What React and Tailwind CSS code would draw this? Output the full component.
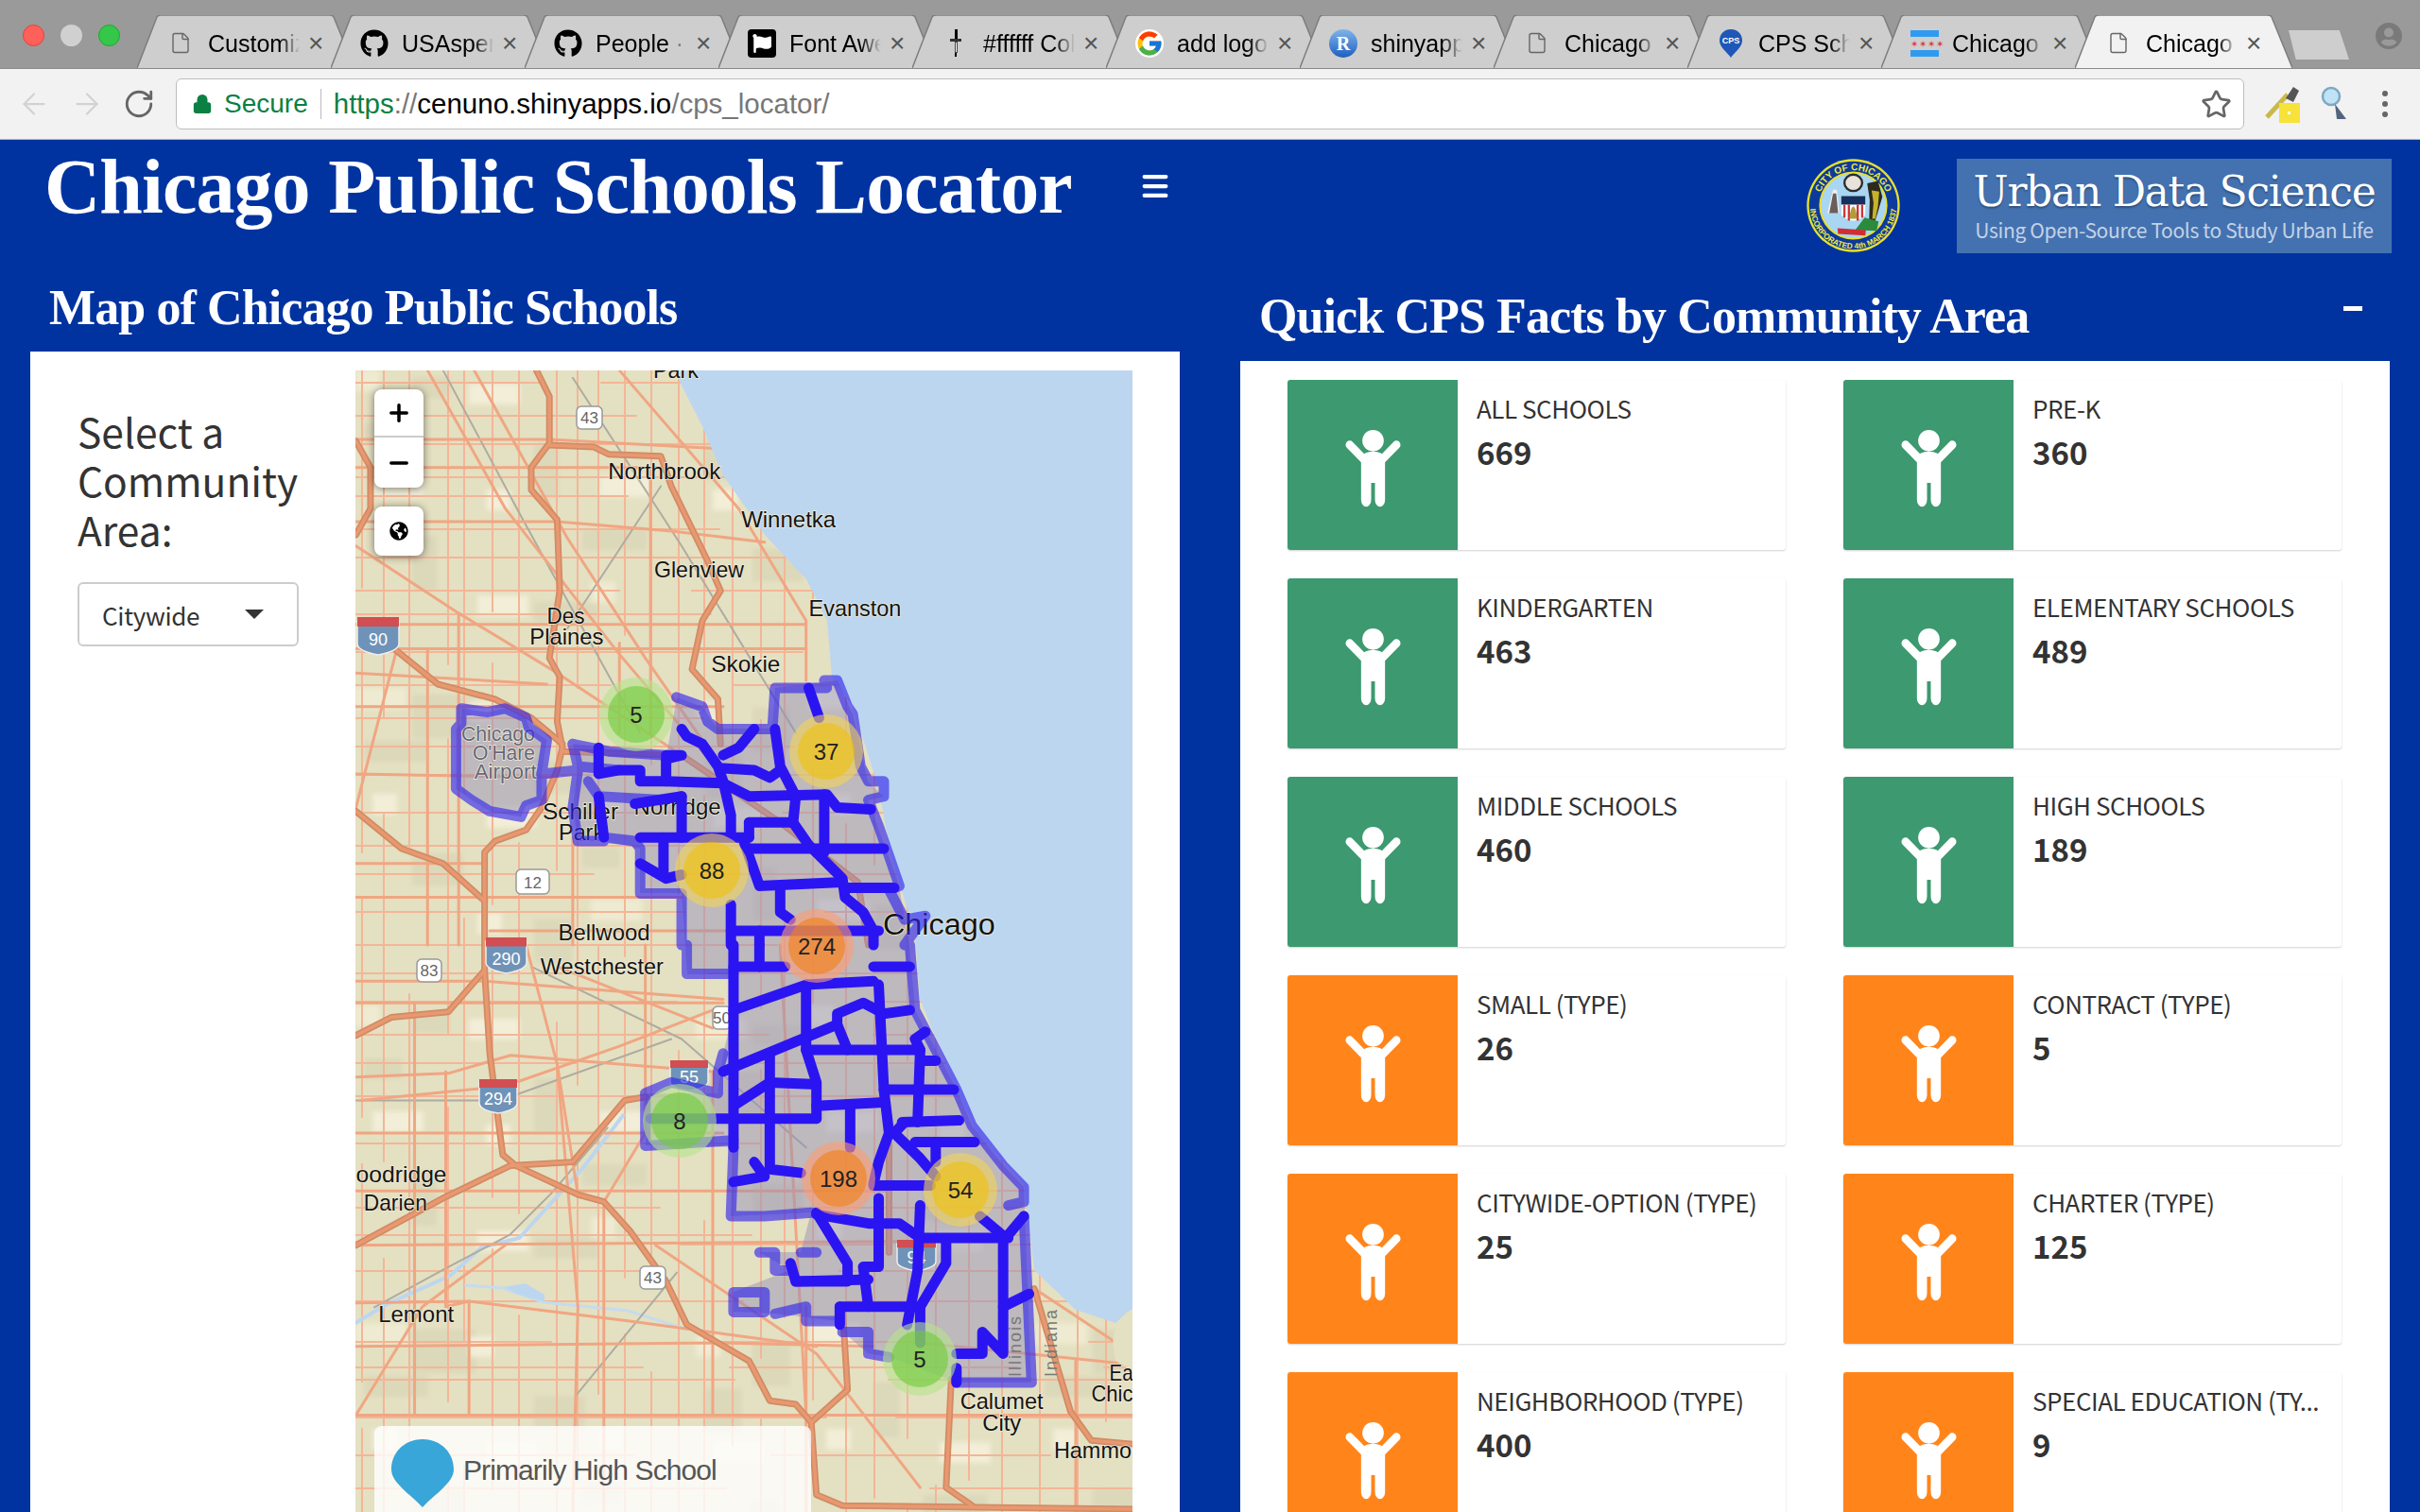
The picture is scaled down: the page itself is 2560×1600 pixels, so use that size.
import { ArrowLeft, ArrowRight, RotateCw, Star, Lock, File, Menu, Plus, Minus } from 'lucide-react';
import { FaGithub, FaFlag, FaGlobeAmericas, FaUserCircle } from 'react-icons/fa';
import { FcGoogle } from 'react-icons/fc';

const sans = "font-['Noto_Sans_CJK_SC','Noto_Sans',sans-serif]";
const arial = "font-['Liberation_Sans',Arial,sans-serif]";
const times = "font-['Liberation_Serif','Times_New_Roman',serif]";

const TABS = [
  { title: 'Customize', icon: 'doc' },
  { title: 'USAspending', icon: 'github' },
  { title: 'People ·', icon: 'github' },
  { title: 'Font Awesome', icon: 'fa' },
  { title: '#ffffff Color', icon: 'dropper' },
  { title: 'add logo', icon: 'google' },
  { title: 'shinyapps', icon: 'r' },
  { title: 'Chicago', icon: 'doc' },
  { title: 'CPS Schools', icon: 'cps' },
  { title: 'Chicago', icon: 'flag' },
  { title: 'Chicago', icon: 'doc', active: true },
];

const FACTS = [
  { label: 'ALL SCHOOLS', value: '669', tone: 'green' },
  { label: 'PRE-K', value: '360', tone: 'green' },
  { label: 'KINDERGARTEN', value: '463', tone: 'green' },
  { label: 'ELEMENTARY SCHOOLS', value: '489', tone: 'green' },
  { label: 'MIDDLE SCHOOLS', value: '460', tone: 'green' },
  { label: 'HIGH SCHOOLS', value: '189', tone: 'green' },
  { label: 'SMALL (TYPE)', value: '26', tone: 'orange' },
  { label: 'CONTRACT (TYPE)', value: '5', tone: 'orange' },
  { label: 'CITYWIDE-OPTION (TYPE)', value: '25', tone: 'orange' },
  { label: 'CHARTER (TYPE)', value: '125', tone: 'orange' },
  { label: 'NEIGHBORHOOD (TYPE)', value: '400', tone: 'orange' },
  { label: 'SPECIAL EDUCATION (TY...', value: '9', tone: 'orange' },
];

// the map data is noted in crop coordinates, these turn it into page pixels
const a = (x, y) => [370 + x / 1.823, 380 + y / 2.529];
const b = (x, y) => [370 + x / 1.823, 1000 + y / 2.613];
const c3 = (x, y) => [376 + x / 3, 1180 + y / 3];
const line = (conv, nums) => {
  const out = [];
  for (let i = 0; i < nums.length; i += 2) out.push(conv(nums[i], nums[i + 1]).join(','));
  return out.join(' ');
};

const WATER = '713,392 743,451 765,503 809,566 853,613 875,657 880,716 902,748 930,835 940,894 957,953 968,985 973,1057 1012,1153 1034,1199 1083,1253 1094,1344 1138,1386 1180,1400 1198,1385 1198,392';

const GRID_X = [383,406,433,474,491,521,549,589,611,633,661,689,718,745,775,805,830,860,895,925,960,990,1025,1060,1100,1140,1170];
const GRID_Y = [405,440,470,505,525,560,590,625,650,690,725,760,790,820,860,895,925,965,1000,1030,1060,1095,1125,1160,1210,1260,1278,1307,1317,1345,1377,1420,1447,1460,1500,1540,1575];

// land cover patches, laid out on a loose grid
const PATCHES = [];
for (let i = 0; i < 14; i++) {
  for (let j = 0; j < 22; j++) {
    const pick = (i * 7 + j * 13 + i * j) % 6;
    if (pick < 3) {
      PATCHES.push({
        x: 376 + i * 60 + (j % 3) * 9,
        y: 392 + j * 56 + (i % 4) * 7,
        w: 26 + ((i + j) % 4) * 14,
        h: 22 + ((i * j) % 4) * 12,
        fill: ['#efebd2', '#dcd8ba', '#f2eed8'][pick],
      });
    }
  }
}

const FREEWAYS_A = [
  [360,30,385,100,385,225,350,290,350,350,400,430,405,620,385,800,405,850,400,970,410,1040,400,1100,370,1200,340,1260,280,1290,260,1320,260,1568],
  [385,230,470,235,500,255,600,260,620,340,690,540,715,620,680,700,660,830,710,910,715,1030],
  [90,780,170,870,280,910,350,960,410,1030],
  [410,1050,640,1060,830,1240,980,1400,1000,1568],
  [12,220,40,290,40,400,12,470],
  [12,1210,100,1310,180,1350,260,1450],
];
const FREEWAYS_B = [
  [12,250,80,200,190,185,260,70,260,0],
  [260,70,270,300,295,580,320,610,440,690,490,710,540,790,610,930,650,1050,770,1150,810,1260,860,1270,890,1320,900,1520,950,1550,1510,1560],
  [12,830,180,700,310,610,430,600,530,430,570,420],
  [890,1320,960,1230,950,1000],
  [1040,550,1040,850],
  [1320,950,1390,1290,1430,1370,1510,1380],
  [1160,1200,1150,1500,1200,1550],
];
const ARTERIALS_A = [
  [12,215,385,215,720,240],
  [12,290,350,290,620,290],
  [12,435,400,435,620,460,800,490],
  [12,710,880,710],
  [12,775,880,775],
  [12,930,720,930],
  [12,1110,400,1120],
  [12,1440,640,1440],
  [150,30,300,400,520,790,710,1100],
  [240,30,420,480,570,800,720,1100],
  [520,30,750,400,880,700,880,860],
  [12,500,210,680,400,840,640,1060],
  [210,680,210,1568],
  [150,780,150,1568],
  [580,300,580,1000],
  [520,760,520,1000],
  [430,1280,430,1568],
  [90,780,12,1200],
  [12,840,380,870],
  [12,1350,260,1350],
  [270,1530,1000,1530],
];
const ARTERIALS_B = [
  [12,100,260,100,720,150],
  [12,160,720,160],
  [12,365,190,355,310,305,700,350],
  [12,520,290,520,720,520],
  [12,680,1040,680],
  [12,830,1060,820],
  [12,990,230,985,540,1040,900,1110],
  [12,1110,700,1100,1010,1110],
  [12,1300,1510,1300],
  [1100,1100,1510,1160],
  [185,350,185,1000,230,985,230,1300],
  [125,160,125,1300],
  [400,330,440,1000,430,1568],
  [570,0,570,520,490,710,490,1568],
  [700,350,700,1300],
  [340,0,400,330,440,690],
  [880,1000,880,1568],
  [12,1300,140,1000,300,830],
  [830,0,880,1300],
  [590,830,900,1130,1100,1500],
  [1320,950,1510,1130],
  [1400,1150,1400,1568],
  [400,60,700,230],
  [20,430,300,390,520,280,700,180],
];

const AREA_OUTLINE_A = [
  [215,935,215,975,205,990,205,1150,235,1180,270,1210,330,1225,340,1195,370,1180,370,1110,380,1020,345,985,340,960,300,935,265,945,215,935],
  [430,1030,500,1050,610,1060],
  [630,905,680,930,690,970,710,990,815,990,820,880,885,880,920,880,915,860,940,860,960,930,970,950,985,1090,1000,1130,1030,1130,1030,1170,1000,1180,1020,1250,1040,1330,1060,1410,1040,1420,1070,1500,1110,1490,1070,1568],
  [370,1110,440,1100,430,1200,440,1290,490,1290],
  [430,1030,440,1090,520,1100],
  [490,1280,550,1290,560,1310,560,1430,640,1430,640,1568],
  [460,1130,480,1170,600,1180],
];
const AREA_OUTLINE_B = [
  [650,0,650,80,740,80],
  [1080,0,1090,180,1170,400,1200,500,1260,610,1300,670,1300,710,1270,720],
  [1300,750,1315,1210,1170,1210],
  [740,560,735,750,800,750,890,740],
  [570,410,570,555,740,540],
  [570,410,620,380,710,410,710,350,720,300],
  [790,850,820,850,820,900,850,900],
  [740,960,800,960,800,1015,740,1015,740,960],
  [820,1020,880,1000,880,1040,945,1040],
  [870,850,900,850],
  [950,1070,1000,1070,1000,1130,1040,1140],
];
const AREA_LINES_A = [
  [480,1040,480,1110,520,1100,560,1100,560,1130,610,1130,720,1135,770,1170,920,1165,940,1200,1005,1205],
  [640,990,650,1010,680,1030,710,1090,720,1130,735,1220,735,1270],
  [720,1060,750,1040,780,990],
  [720,1095,780,1100,810,1120,830,1100],
  [820,990,830,1090,860,1170,855,1240,885,1300,950,1390,955,1440,990,1480,1010,1530,1010,1568],
  [885,880,905,960],
  [915,1165,915,1320],
  [610,1060,640,1060,610,1070,610,1130],
  [560,1280,770,1280],
  [770,1310,1030,1310],
  [770,1240,855,1240],
  [770,1240,770,1280],
  [640,1170,640,1280],
  [605,1280,605,1380],
  [560,1350,610,1390,640,1380],
  [760,1290,790,1410,950,1400],
  [955,1415,1050,1415],
  [830,1410,830,1480,850,1500],
  [735,1460,735,1568],
  [735,1530,1020,1530],
  [790,1530,790,1568],
  [480,1170,490,1280],
  [550,1190,640,1170],
];
const AREA_LINES_B = [
  [740,0,740,560],
  [740,60,840,60],
  [790,0,790,60],
  [740,180,880,110,1010,100],
  [880,110,880,290,900,380,900,480],
  [720,350,940,220,940,190,990,160,1030,190,1080,180],
  [940,220,960,290],
  [880,290,1100,290,1090,260,1110,240],
  [1100,320,1130,320],
  [1020,110,1030,400,1040,520,1020,600,1010,660],
  [1010,60,1080,60],
  [1030,400,1165,400],
  [1100,290,1095,490],
  [1065,490,1175,485],
  [1070,490,1050,520,1100,590,1130,640],
  [1090,545,1205,545],
  [1130,545,1130,600],
  [745,440,810,380,890,385],
  [810,300,810,620,870,630],
  [780,600,800,640,740,655],
  [580,480,900,480],
  [900,445,1030,435],
  [965,440,965,560],
  [1010,665,1120,665],
  [1020,700,1020,890,990,890,1000,1000],
  [900,740,960,880,960,930,860,930,850,880],
  [860,930,1000,925],
  [900,745,1000,770,1060,770,1100,810,1270,810],
  [1100,720,1095,900,1075,1050],
  [1150,815,1150,880,1100,1000],
  [945,1000,1100,1000,1100,1100],
  [945,1000,945,1050],
  [1260,810,1260,1130,1220,1070,1220,1130,1170,1130],
  [1260,1000,1310,965],
  [1215,750,1265,810,1300,750],
  [1170,1170,1170,1210],
];
const CITY_FILL = '606,787 705,799 716,738 743,748 759,771 817,771 820,728 886,720 902,756 918,827 935,843 918,847 940,906 951,937 957,973 962,1000 968,1069 1012,1153 1028,1191 1061,1233 1083,1256 1091,1463 1012,1463 940,1436 918,1432 891,1409 888,1398 820,1390 776,1388 776,1367 836,1344 803,1325 847,1325 858,1283 773,1287 776,1214 683,1212 683,1157 759,1157 765,1115 776,1069 776,1031 727,1031 721,945 677,945 677,898 639,890 611,890 606,854 611,815';

const CLUSTERS = [
  { n: 5, x: 673, y: 756, c: 'g' },
  { n: 37, x: 874, y: 795, c: 'y' },
  { n: 88, x: 753, y: 921, c: 'y' },
  { n: 274, x: 864, y: 1001, c: 'o' },
  { n: 8, x: 719, y: 1186, c: 'g' },
  { n: 198, x: 887, y: 1247, c: 'o' },
  { n: 54, x: 1016, y: 1259, c: 'y' },
  { n: 5, x: 973, y: 1438, c: 'g' },
];
const CLUSTER_COLORS = {
  g: ['rgba(181,226,140,0.6)', 'rgba(110,204,57,0.6)'],
  y: ['rgba(241,211,87,0.6)', 'rgba(240,194,12,0.6)'],
  o: ['rgba(253,156,115,0.6)', 'rgba(241,128,23,0.6)'],
};

// [text, x, baseline, width, size, colour]
const LABELS = [
  ['Park', ...a(585, 50), 48, 24],
  ['Northbrook', ...a(498, 322), 119, 24],
  ['Winnetka', ...a(755, 450), 100, 24],
  ['Glenview', ...a(587, 585), 95, 24],
  ['Evanston', ...a(885, 688), 98, 24],
  ['Des', ...a(380, 707), 40, 24],
  ['Plaines', ...a(347, 764), 78, 24],
  ['Skokie', ...a(697, 838), 73, 24],
  ['Chicago', ...a(215, 1022), 78, 22, '#66667a'],
  ["O'Hare", ...a(237, 1072), 66, 22, '#66667a'],
  ['Airport', ...a(240, 1122), 66, 22, '#66667a'],
  ['Schiller', ...a(372, 1232), 80, 24],
  ['Park', ...a(403, 1288), 48, 24],
  ['Norridge', ...a(548, 1218), 92, 24],
  ['Chicago', ...a(1028, 1540), 119, 31],
  ['Bellwood', ...a(402, 1555), 97, 24],
  ['Westchester', ...b(368, 82), 130, 24],
  ['oodridge', ...b(12, 655), 96, 24],
  ['Darien', ...b(27, 735), 67, 24],
  ['Lemont', ...b(55, 1042), 80, 24],
  ['Calumet', ...b(1177, 1282), 88, 24],
  ['City', ...b(1220, 1342), 41, 24],
  ['Ea', ...b(1465, 1205), 25, 24],
  ['Chic', ...b(1430, 1262), 44, 24],
  ['Hammo', ...b(1358, 1420), 82, 24],
];

const SHIELDS = [
  { kind: 'us', t: '43', x: 610, y: 430, w: 27, h: 24 },
  { kind: 'i', t: '90', x: 378, y: 653, w: 44, h: 40 },
  { kind: 'us', t: '12', x: 546, y: 920, w: 35, h: 26 },
  { kind: 'us', t: '83', x: 441, y: 1015, w: 26, h: 24 },
  { kind: 'i', t: '290', x: 514, y: 992, w: 43, h: 38 },
  { kind: 'i', t: '55', x: 709, y: 1122, w: 40, h: 32 },
  { kind: 'i', t: '294', x: 507, y: 1142, w: 40, h: 36 },
  { kind: 'us', t: '50', x: 754, y: 1065, w: 19, h: 24 },
  { kind: 'us', t: '43', x: 677, y: 1340, w: 27, h: 24 },
  { kind: 'i', t: '94', x: 949, y: 1312, w: 41, h: 33 },
];

function ChildIcon() {
  return (
    <svg viewBox="68 44 176 246" className="mt-[8px] h-[82px] w-[59px]">
      <g fill="#fff" stroke="none">
        <circle cx="156" cy="78" r="34" />
        <path d="M118 130 Q128 112 156 112 Q184 112 194 130 V265 A16 23 0 0 1 162 265 V212 H150 V265 A16 23 0 0 1 118 265 Z" />
      </g>
      <path d="M82 91 L126 136 M230 91 L186 136" stroke="#fff" strokeWidth="26" strokeLinecap="round" fill="none" />
    </svg>
  );
}

function Favicon({ icon }) {
  if (icon === 'doc') return <File className="h-[27px] w-[24px] text-[#666]" strokeWidth={1.4} />;
  if (icon === 'github') return <FaGithub className="h-[30px] w-[30px] text-black" />;
  if (icon === 'google') return <FcGoogle className="h-[30px] w-[30px] rounded-full bg-white" />;
  if (icon === 'fa') {
    return (
      <div className="flex h-[30px] w-[30px] items-center justify-center rounded-[4px] bg-black">
        <FaFlag className="h-[20px] w-[20px] text-white" />
      </div>
    );
  }
  if (icon === 'dropper') {
    return (
      <div className="flex h-[30px] w-[30px] flex-col items-center justify-center">
        <div className="h-[10px] w-[3px] bg-black" />
        <div className="h-[3px] w-[12px] bg-[#333]" />
        <div className="h-[12px] w-[3px] border border-[#444] bg-white" />
        <div className="h-[4px] w-[2px] bg-black" />
      </div>
    );
  }
  if (icon === 'r') {
    return (
      <div className="flex h-[30px] w-[30px] items-center justify-center rounded-full bg-gradient-to-b from-[#7fb4ea] to-[#1c5fc0]">
        <span className={`${times} text-[20px] font-bold leading-none text-white`}>R</span>
      </div>
    );
  }
  if (icon === 'cps') {
    return (
      <svg viewBox="0 0 30 32" className="h-[32px] w-[30px]">
        <path d="M15 1C7 1 3 7 3 13c0 7 8 12 12 18 4-6 12-11 12-18C27 7 23 1 15 1z" fill="#1f57b8" />
        <text x="15" y="16" textAnchor="middle" fontSize="9" fontWeight="700" fill="#fff" fontFamily="Liberation Sans">CPS</text>
      </svg>
    );
  }
  return (
    <div className="flex h-[28px] w-[30px] flex-col justify-between">
      <div className="h-[7px] bg-[#2f9bf0]" />
      <div className="text-center text-[10px] leading-[8px] tracking-[1px] text-[#d9363e]">✶✶✶✶</div>
      <div className="h-[7px] bg-[#2f9bf0]" />
    </div>
  );
}

function Tab({ tab }) {
  const fill = tab.active ? '#f2f2f2' : '#cecece';
  return (
    <div className="relative -ml-[25px] flex h-[56px] w-[230px] shrink-0 items-center pl-[31px] pt-[3px]">
      <svg viewBox="0 0 230 56" className="absolute inset-0 h-full w-full">
        <path d="M0 56 L21 2 Q22 0 25 0 L204 0 Q207 0 208 2 L230 56" fill={fill} stroke="#7d7d7d" strokeWidth="1.5" />
      </svg>
      <div className="relative flex w-[30px] shrink-0 justify-center"><Favicon icon={tab.icon} /></div>
      <div className={`${arial} relative ml-[14px] w-[97px] overflow-hidden whitespace-nowrap text-[25px] leading-[30px] text-black [mask-image:linear-gradient(to_right,black_78%,transparent)]`}>
        {tab.title}
      </div>
      <span className={`${arial} relative ml-[9px] text-[28px] font-light leading-none text-[#555]`}>×</span>
    </div>
  );
}

function BrowserChrome() {
  return (
    <>
      <div className="relative flex h-[73px] shrink-0 items-end border-b border-[#8a8a8a] bg-[#9a9a9a] pl-[170px]">
        <div className="absolute left-[24px] top-[26px] flex gap-[17px]">
          <div className="h-[23px] w-[23px] rounded-full border border-[#e0443e] bg-[#ff6059]" />
          <div className="h-[23px] w-[23px] rounded-full bg-[#d0d0d0]" />
          <div className="h-[23px] w-[23px] rounded-full border border-[#1aab29] bg-[#34c749]" />
        </div>
        {TABS.map((tab, i) => <Tab key={i} tab={tab} />)}
        <div className="mb-[9px] ml-[-4px] h-[31px] w-[64px] [clip-path:polygon(0_0,84%_0,100%_100%,12%_100%)] bg-[#cecece]" />
        <FaUserCircle className="absolute right-[19px] top-[23px] h-[30px] w-[28px] text-[#7a7a7a]" />
      </div>
      <div className="flex h-[75px] shrink-0 items-center border-b border-[#a8b2c8] bg-[#f2f2f2] pl-[18px] pr-[34px]">
        <ArrowLeft className="h-[36px] w-[36px] shrink-0 text-[#d2d2d2]" strokeWidth={1.5} />
        <ArrowRight className="ml-[20px] h-[36px] w-[36px] shrink-0 text-[#d2d2d2]" strokeWidth={1.5} />
        <RotateCw className="ml-[20px] h-[34px] w-[34px] shrink-0 text-[#666]" strokeWidth={2} />
        <div className="ml-[22px] flex h-[54px] w-[2188px] shrink-0 items-center rounded-[6px] border border-[#bdbdbd] bg-white pl-[16px] pr-[12px]">
          <Lock className="h-[22px] w-[22px] fill-[#0b8043] text-[#0b8043]" strokeWidth={2} />
          <span className={`${arial} ml-[12px] text-[28px] leading-none text-[#0b8043]`}>Secure</span>
          <div className="ml-[13px] h-[32px] w-px bg-[#bbb]" />
          <span className={`${arial} ml-[13px] text-[29.5px] leading-none text-[#777]`}>
            <span className="text-[#0b8043]">https</span>://<span className="text-black">cenuno.shinyapps.io</span>/cps_locator/
          </span>
          <Star className="ml-auto h-[33px] w-[33px] text-[#666]" strokeWidth={2} />
        </div>
        <svg viewBox="0 0 40 40" className="ml-[20px] h-[40px] w-[40px] shrink-0">
          <path d="M4 34 L26 10" stroke="#c9b94a" strokeWidth="5" />
          <path d="M24 14 L32 2 L38 6 L32 18 Z" fill="#555" />
          <rect x="17" y="19" width="22" height="21" fill="#f7e23a" />
          <rect x="26" y="28" width="3" height="3" fill="#fff" />
        </svg>
        <svg viewBox="0 0 32 40" className="ml-[20px] h-[40px] w-[32px] shrink-0">
          <circle cx="12" cy="12" r="9" fill="#bfe3f5" stroke="#7fa8c2" strokeWidth="2.5" />
          <path d="M16 20 L28 36 L18 36 Z" fill="#52657d" />
        </svg>
        <div className="ml-auto flex flex-col gap-[5px]">
          <div className="h-[6px] w-[6px] rounded-full bg-[#666]" />
          <div className="h-[6px] w-[6px] rounded-full bg-[#666]" />
          <div className="h-[6px] w-[6px] rounded-full bg-[#666]" />
        </div>
      </div>
    </>
  );
}

function Seal() {
  return (
    <svg viewBox="0 0 296 296" className="h-[99px] w-[99px]">
      <defs>
        <path id="sealTop" d="M148 148 m-112 0 a112 112 0 0 1 224 0" />
        <path id="sealBottom" d="M148 148 m-137 0 a137 137 0 0 0 274 0" />
      </defs>
      <circle cx="148" cy="148" r="147" fill="#e8e02c" />
      <circle cx="148" cy="148" r="140" fill="#0c3a9c" />
      <circle cx="148" cy="148" r="108" fill="#e8e02c" />
      <circle cx="148" cy="148" r="102" fill="#a9d6f2" />
      <text fontSize="30" fill="#f0e83c" fontFamily="Liberation Sans" fontWeight="700"><textPath href="#sealTop" startOffset="50%" textAnchor="middle">CITY OF CHICAGO</textPath></text>
      <text fontSize="25" fill="#f0e83c" fontFamily="Liberation Sans" fontWeight="700"><textPath href="#sealBottom" startOffset="50%" textAnchor="middle">INCORPORATED 4th MARCH 1837</textPath></text>
      <path d="M110 118 H186 V178 Q148 214 110 178 Z" fill="#fff" />
      <rect x="110" y="118" width="76" height="27" fill="#14305e" />
      <path d="M120 145 V186 M134 145 V196 M162 145 V196 M176 145 V186" stroke="#c8383c" strokeWidth="7" />
      <path d="M136 190 Q138 155 148 150 Q158 155 160 190 Z" fill="#b59a3a" />
      <path d="M66 172 L104 172 L96 98 L84 98 Z" fill="#efefef" />
      <path d="M72 172 L100 172 L94 110 L84 110 Z" fill="#4a3a34" opacity="0.8" />
      <ellipse cx="148" cy="76" rx="28" ry="26" fill="#e8e2da" stroke="#2c2c2c" strokeWidth="7" />
      <path d="M192 78 L226 70 L240 120 L226 168 L214 206 L198 200 L200 130 Z" fill="#2c2a1c" />
      <path d="M206 100 L230 104 L226 150 L218 190 L208 190 L212 140 Z" fill="#c7b22c" />
      <path d="M154 226 L184 186 L228 198 L222 228 Z" fill="#2c8a3c" />
      <path d="M98 220 L188 226 L186 243 L100 238 Z" fill="#cf2e34" />
    </svg>
  );
}

function MapArt() {
  return (
    <svg viewBox="376 392 822 1208" className="absolute inset-0 h-full w-full">
      <defs>
        <filter id="soft"><feGaussianBlur stdDeviation="0.6" /></filter>
        <filter id="softer"><feGaussianBlur stdDeviation="2.5" /></filter>
      </defs>
      <rect x="376" y="392" width="822" height="1208" fill="#e4e0c2" />
      <g filter="url(#softer)">
        {PATCHES.map((p, i) => <rect key={i} x={p.x} y={p.y} width={p.w} height={p.h} fill={p.fill} />)}
      </g>
      <g filter="url(#soft)" fill="none" strokeLinejoin="round" strokeLinecap="round">
        <g stroke="#f3b697" strokeWidth="2">
          {GRID_X.map((x, i) => <line key={i} x1={x} y1="392" x2={x} y2="1600" strokeDasharray={`${230 + (i * 137) % 330} ${50 + (i * 53) % 130}`} />)}
          {GRID_Y.map((y, i) => <line key={i} x1="376" y1={y} x2="1198" y2={y} strokeDasharray={`${200 + (i * 97) % 300} ${60 + (i * 71) % 160}`} />)}
        </g>
        <polyline points={line(c3, [0,660,100,600,300,510,400,420,520,390,620,280,720,170,850,0])} stroke="#bcd6f0" strokeWidth="4" />
        <polyline points={line(c3, [350,540,470,550,600,595,860,620,1050,680])} stroke="#c5dbef" strokeWidth="3" />
        <polyline points={line(c3, [60,610,280,490,490,380,620,250,800,40])} stroke="#aeaca0" strokeWidth="2" />
        <polyline points={line(c3, [700,890,1020,500])} stroke="#aeaca0" strokeWidth="2" />
        <g stroke="#aeaca0" strokeWidth="2">
          <polyline points={line(a, [180,30,330,420,560,1000])} />
          <polyline points={line(a, [430,50,640,500,860,1000])} />
          <polyline points={line(a, [420,720,600,340])} />
          <polyline points={line(b, [12,430,290,430,620,260])} />
          <polyline points={line(b, [350,60,640,260,880,560])} />
        </g>
        <g stroke="#f0a682" strokeWidth="3">
          {ARTERIALS_A.map((p, i) => <polyline key={i} points={line(a, p)} />)}
          {ARTERIALS_B.map((p, i) => <polyline key={i} points={line(b, p)} />)}
        </g>
        <g stroke="#d08c66" strokeWidth="7">
          {FREEWAYS_A.map((p, i) => <polyline key={i} points={line(a, p)} />)}
          {FREEWAYS_B.map((p, i) => <polyline key={i} points={line(b, p)} />)}
        </g>
        <g stroke="#e9986f" strokeWidth="3.5">
          {FREEWAYS_A.map((p, i) => <polyline key={i} points={line(a, p)} />)}
          {FREEWAYS_B.map((p, i) => <polyline key={i} points={line(b, p)} />)}
        </g>
      </g>
      <polygon points={line(c3, [470,545,540,535,600,570,600,592,520,570])} fill="#bcd6f0" />
      <polygon points={WATER} fill="#bcd6f0" />
      <path d="M1198 1385 Q1170 1400 1180 1440 L1198 1450 Z" fill="#e4e0c2" />
      <polygon points={CITY_FILL} fill="#8f8ab8" opacity="0.45" />
      <polygon points={line(a, AREA_OUTLINE_A[0])} fill="#8f8ab8" opacity="0.45" />
      {LABELS.map(([t, x, y, w, size, color], i) => (
        <text key={i} x={x} y={y} textLength={w} lengthAdjust="spacingAndGlyphs" fontSize={size} fill={color || '#141414'} fontFamily="Liberation Sans" stroke="#efecd8" strokeWidth="1.5" paintOrder="stroke">{t}</text>
      ))}
      <text transform="translate(1080 1457) rotate(-90)" fontSize="18" fill="#777" fontFamily="Liberation Sans" letterSpacing="2">Illinois</text>
      <text transform="translate(1118 1457) rotate(-90)" fontSize="18" fill="#777" fontFamily="Liberation Sans" letterSpacing="2">Indiana</text>
      {SHIELDS.map((s, i) => (
        s.kind === 'us' ? (
          <g key={i}>
            <rect x={s.x} y={s.y} width={s.w} height={s.h} rx="5" fill="#fff" stroke="#999" strokeWidth="1.5" />
            <text x={s.x + s.w / 2} y={s.y + s.h - 6} textAnchor="middle" fontSize="17" fill="#666" fontFamily="Liberation Sans">{s.t}</text>
          </g>
        ) : (
          <g key={i}>
            <path d={`M${s.x} ${s.y + 4} H${s.x + s.w} V${s.y + s.h * 0.7} Q${s.x + s.w} ${s.y + s.h * 0.9} ${s.x + s.w / 2} ${s.y + s.h} Q${s.x} ${s.y + s.h * 0.9} ${s.x} ${s.y + s.h * 0.7} Z`} fill="#6f93b8" stroke="#eee" strokeWidth="1.5" />
            <rect x={s.x} y={s.y} width={s.w} height={s.h * 0.25} fill="#d14e52" />
            <text x={s.x + s.w / 2} y={s.y + s.h * 0.75} textAnchor="middle" fontSize="18" fill="#fff" fontFamily="Liberation Sans">{s.t}</text>
          </g>
        )
      ))}
      <g fill="none" stroke="#2f22ee" strokeLinejoin="round" strokeLinecap="round">
        <g strokeWidth="11" opacity="0.62">
          {AREA_OUTLINE_A.map((p, i) => <polyline key={i} points={line(a, p)} />)}
          {AREA_OUTLINE_B.map((p, i) => <polyline key={i} points={line(b, p)} />)}
        </g>
        <g strokeWidth="11" stroke="#2b14f2">
          {AREA_LINES_A.map((p, i) => <polyline key={i} points={line(a, p)} />)}
          {AREA_LINES_B.map((p, i) => <polyline key={i} points={line(b, p)} />)}
        </g>
      </g>
      {CLUSTERS.map((c, i) => (
        <g key={i}>
          <circle cx={c.x} cy={c.y} r="39" fill={CLUSTER_COLORS[c.c][0]} />
          <circle cx={c.x} cy={c.y} r="30" fill={CLUSTER_COLORS[c.c][1]} />
          <text x={c.x} y={c.y + 9} textAnchor="middle" fontSize="24" fill="#222" fontFamily="Liberation Sans">{c.n}</text>
        </g>
      ))}
    </svg>
  );
}

function MapPanel() {
  return (
    <div className="relative h-full flex-1 overflow-hidden">
      <MapArt />
      <div className="absolute left-[20px] top-[20px] w-[52px] overflow-hidden rounded-[8px] bg-white shadow-[0_1px_8px_rgba(0,0,0,0.5)]">
        <div className="flex h-[51px] items-center justify-center border-b-2 border-[#ccc]"><Plus className="h-[28px] w-[28px] text-black" strokeWidth={3} /></div>
        <div className="flex h-[53px] items-center justify-center"><Minus className="h-[28px] w-[28px] text-black" strokeWidth={3} /></div>
      </div>
      <div className="absolute left-[20px] top-[144px] flex h-[52px] w-[52px] items-center justify-center rounded-[8px] bg-white shadow-[0_1px_8px_rgba(0,0,0,0.5)]">
        <FaGlobeAmericas className="h-[20px] w-[20px] text-black" />
      </div>
      <div className="absolute bottom-0 left-[20px] flex h-[91px] w-[462px] items-start gap-[10px] rounded-t-[8px] bg-white/80 pl-[18px] pt-[14px]">
        <svg viewBox="0 0 66 72" className="h-[72px] w-[66px]">
          <path d="M33 0C14 0 0 14 0 32c0 14 20 26 33 40 13-14 33-26 33-40C66 14 52 0 33 0z" fill="#38a6d8" />
        </svg>
        <span className={`${arial} mt-[18px] whitespace-nowrap text-[30px] leading-none tracking-[-0.9px] text-[#555]`}>Primarily High School</span>
      </div>
    </div>
  );
}

function FactCard({ fact }) {
  return (
    <div className="flex h-[180px] overflow-hidden rounded-[3px] bg-white shadow-[0_1px_2px_rgba(0,0,0,0.18)]">
      <div className={`flex w-[180px] shrink-0 items-center justify-center ${fact.tone === 'green' ? 'bg-[#3d9970]' : 'bg-[#ff851b]'}`}>
        <ChildIcon />
      </div>
      <div className={`${sans} pl-[20px] pt-[12px] text-[#333]`}>
        <div className="whitespace-nowrap text-[26px] leading-[36px] tracking-[-0.45px]">{fact.label}</div>
        <div className="mt-[8px] text-[33px] font-bold leading-[40px]">{fact.value}</div>
      </div>
    </div>
  );
}

export default function App() {
  return (
    <div className="flex h-[1600px] w-[2560px] flex-col overflow-hidden bg-[#0033a0]">
      <BrowserChrome />

      <div className="flex h-[120px] shrink-0 items-start pr-[30px]">
        <h1 className={`${times} ml-[47px] mt-[9px] whitespace-nowrap text-[82px] font-bold leading-[82px] tracking-[-0.9px] text-white`}>Chicago Public Schools Locator</h1>
        <Menu className="ml-[71px] mt-[32px] h-[34px] w-[34px] text-white" strokeWidth={3} />
        <div className="ml-auto mr-[60px] mt-[20px]"><Seal /></div>
        <div className="mt-[20px] flex h-[100px] w-[460px] flex-col items-center justify-center bg-[#4472b0]">
          <div className="whitespace-nowrap font-['DejaVu_Serif',serif] text-[44px] leading-[50px] tracking-[-1.3px] text-white [text-shadow:0_2px_2px_rgba(0,0,0,0.3)]">Urban Data Science</div>
          <div className={`${sans} whitespace-nowrap text-[21px] leading-[30px] tracking-[-0.35px] text-[#c5d2e6]`}>Using Open-Source Tools to Study Urban Life</div>
        </div>
      </div>

      <div className="flex min-h-0 flex-1 pl-[32px] pr-[32px]">
        <section className="flex w-[1216px] flex-col">
          <h2 className={`${times} ml-[20px] h-[104px] shrink-0 whitespace-nowrap pt-[23px] text-[52px] font-bold leading-[70px] tracking-[-0.9px] text-white`}>Map of Chicago Public Schools</h2>
          <div className="flex min-h-0 flex-1 bg-white pl-[50px] pr-[50px] pt-[20px]">
            <div className="w-[294px] shrink-0">
              <div className={`${sans} w-[243px] pt-[38px] text-[42.5px] leading-[52px] text-[#333]`}>Select a Community Area:</div>
              <div className={`${sans} mt-[30px] flex h-[68px] w-[234px] items-center rounded-[6px] border-2 border-[#ccc] pl-[24px] text-[26px] tracking-[-0.3px] text-[#333]`}>
                Citywide
                <div className="ml-[48px] h-0 w-0 border-x-[10px] border-t-[10px] border-x-transparent border-t-[#333]" />
              </div>
            </div>
            <MapPanel />
          </div>
        </section>

        <section className="ml-[64px] flex w-[1216px] flex-col">
          <div className="relative h-[114px] shrink-0">
            <h2 className={`${times} absolute left-[20px] top-[32px] whitespace-nowrap text-[52px] font-bold leading-[70px] tracking-[-0.9px] text-white`}>Quick CPS Facts by Community Area</h2>
            <div className="absolute right-[29px] top-[56px] h-[5px] w-[20px] bg-white" />
          </div>
          <div className="grid min-h-0 flex-1 grid-cols-[527px_527px] content-start gap-x-[61px] gap-y-[30px] bg-white pl-[50px] pt-[20px]">
            {FACTS.map((fact) => <FactCard key={fact.label} fact={fact} />)}
          </div>
        </section>
      </div>
    </div>
  );
}
